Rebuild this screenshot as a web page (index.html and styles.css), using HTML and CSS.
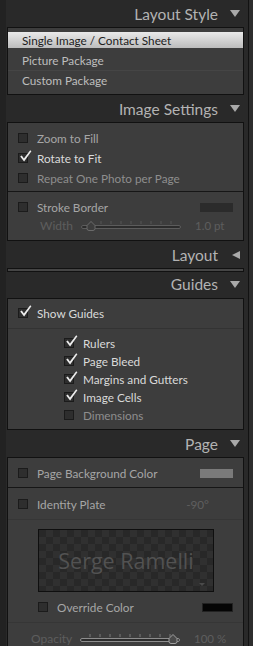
FILE: index.html
```html
<!DOCTYPE html>
<html lang="en">

<head>
    <meta charset="UTF-8">
    <meta name="viewport" content="width=device-width, initial-scale=1.0">
    <title>Print Panels</title>

    <link rel="stylesheet" href="styles.css">
</head>

<body>
    <div class="sidebar">

        <!-- Layout Style -->
        <div class="header"><span class="title">Layout Style</span><span class="arrow down"></span></div>
        <div class="box">
            <div class="list">
                <div class="item active">Single Image / Contact Sheet</div>
                <div class="item">Picture Package</div>
                <div class="item">Custom Package</div>
            </div>
        </div>

        <!-- Image Settings -->
        <div class="header"><span class="title">Image Settings</span><span class="arrow down"></span></div>
        <div class="box">
            <div class="group split">
                <div class="row"><span class="check"></span><span class="label">Zoom to Fill</span></div>
                <div class="row on"><span class="check"><svg viewBox="0 0 13 14"><path d="M1.2 7.6 L2.8 6.6 L4.9 9.6 L11.2 1.2 L12.4 2.2 L5.1 12.6 Z" /></svg></span><span class="label">Rotate to Fit</span></div>
                <div class="row dim"><span class="check"></span><span class="label">Repeat One Photo per Page</span></div>
            </div>
            <div class="group stroke">
                <div class="row"><span class="check"></span><span class="label">Stroke Border</span><span class="swatch dark"></span></div>
                <div class="slide-row width">
                    <span class="slide-label">Width</span>
                    <svg class="slider off" viewBox="0 0 102 14">
                        <path class="ticks" d="M10 3v3M20 3v3M30 3v3M40 3v3M50 3v3M60 3v3M70 3v3M80 3v3M90 3v3" />
                        <rect class="track" x="0.5" y="7.5" width="99" height="3" rx="1.5" />
                        <path class="thumb" d="M10 3.5 L14 7.5 L14 10.5 Q14 12.5 12 12.5 L8 12.5 Q6 12.5 6 10.5 L6 7.5 Z" />
                    </svg>
                    <span class="slide-value">1.0 pt</span>
                </div>
            </div>
        </div>

        <!-- Layout (collapsed) -->
        <div class="header"><span class="title">Layout</span><span class="arrow left"></span></div>
        <div class="box closed"></div>

        <!-- Guides -->
        <div class="header tight"><span class="title">Guides</span><span class="arrow down"></span></div>
        <div class="box">
            <div class="group guides-top">
                <div class="row on"><span class="check"><svg viewBox="0 0 13 14"><path d="M1.2 7.6 L2.8 6.6 L4.9 9.6 L11.2 1.2 L12.4 2.2 L5.1 12.6 Z" /></svg></span><span class="label">Show Guides</span></div>
            </div>
            <div class="group guides-list">
                <div class="row sub on"><span class="check"><svg viewBox="0 0 13 14"><path d="M1.2 7.6 L2.8 6.6 L4.9 9.6 L11.2 1.2 L12.4 2.2 L5.1 12.6 Z" /></svg></span><span class="label">Rulers</span></div>
                <div class="row sub on"><span class="check"><svg viewBox="0 0 13 14"><path d="M1.2 7.6 L2.8 6.6 L4.9 9.6 L11.2 1.2 L12.4 2.2 L5.1 12.6 Z" /></svg></span><span class="label">Page Bleed</span></div>
                <div class="row sub on"><span class="check"><svg viewBox="0 0 13 14"><path d="M1.2 7.6 L2.8 6.6 L4.9 9.6 L11.2 1.2 L12.4 2.2 L5.1 12.6 Z" /></svg></span><span class="label">Margins and Gutters</span></div>
                <div class="row sub on"><span class="check"><svg viewBox="0 0 13 14"><path d="M1.2 7.6 L2.8 6.6 L4.9 9.6 L11.2 1.2 L12.4 2.2 L5.1 12.6 Z" /></svg></span><span class="label">Image Cells</span></div>
                <div class="row sub dim"><span class="check"></span><span class="label">Dimensions</span></div>
            </div>
        </div>

        <!-- Page -->
        <div class="header"><span class="title">Page</span><span class="arrow down"></span></div>
        <div class="box open-end">
            <div class="group page-bg">
                <div class="row"><span class="check"></span><span class="label">Page Background Color</span><span class="swatch grey"></span></div>
            </div>
            <div class="group plate-head">
                <div class="row"><span class="check"></span><span class="label">Identity Plate</span><span class="angle">-90°</span></div>
            </div>
            <div class="group plate-body">
                <div class="plate">
                    <span class="plate-text">Serge Ramelli</span>
                    <span class="plate-menu"></span>
                </div>
                <div class="row indent"><span class="check"></span><span class="label">Override Color</span><span class="swatch black"></span></div>
            </div>
            <div class="group opacity">
                <div class="slide-row">
                    <span class="slide-label">Opacity</span>
                    <svg class="slider" viewBox="0 0 102 14">
                        <path class="ticks" d="M10 3v3M20 3v3M30 3v3M40 3v3M50 3v3M60 3v3M70 3v3M80 3v3M90 3v3" />
                        <rect class="track" x="0.5" y="7.5" width="99" height="3" rx="1.5" />
                        <path class="thumb" d="M93 3.5 L97 7.5 L97 10.5 Q97 12.5 95 12.5 L91 12.5 Q89 12.5 89 10.5 L89 7.5 Z" />
                    </svg>
                    <span class="slide-value">100 %</span>
                </div>
            </div>
        </div>

    </div>
</body>

</html>
```

FILE: styles.css
```css
html,
body {
    margin: 0;
    height: 100%;
    background-color: #2d2d2d;
    overflow: hidden;
}

body {
    font-family: "Lato", "Open Sans", sans-serif;
    font-size: 11.75px;
}

.sidebar {
    width: 241px;
    height: 646px;
    background-color: #292929;
    border-left: 6px solid #222;
    border-right: 1px solid #121212;
    padding-left: 1px;
    overflow: hidden;
}

/* 標題列 */
.header {
    height: 27px;
    display: flex;
    align-items: center;
    justify-content: flex-end;
    padding-right: 8px;
    color: #b3b3b3;
}

.header.tight {
    height: 26px;
    align-items: flex-start;
}

.header.tight .title {
    margin-top: 3px;
}

.header.tight .arrow {
    margin-top: 9px;
}

.title {
    font-size: 15.5px;
    font-weight: 400;
    margin-right: 12px;
}

.arrow {
    width: 0;
    height: 0;
}

.arrow.down {
    border-left: 5px solid transparent;
    border-right: 5px solid transparent;
    border-top: 7px solid #a9a9a9;
}

.arrow.left {
    border-top: 4.5px solid transparent;
    border-bottom: 4.5px solid transparent;
    border-right: 8px solid #a9a9a9;
    margin-left: 2px;
}

/* 面板 */
.box {
    width: 235px;
    background-color: #3d3d3d;
    border: 1px solid #111;
    margin-right: 4px;
}

.box.closed {
    height: 2px;
    background-color: #454545;
}

.box.open-end {
    border-bottom: none;
}

.list {
    padding: 2px 0 4px;
}

.item {
    height: 20px;
    box-sizing: border-box;
    display: flex;
    align-items: center;
    padding-left: 14px;
    border-top: 1px solid #454545;
    color: #bdbdbd;
}

.item.active {
    height: 16px;
    margin: 2px 0;
    border-top: none;
    background: linear-gradient(#e9e9e9, #bcbcbc);
    color: #1c1c1c;
}

.item.active + .item {
    border-top: none;
}

.group.split {
    padding: 5px 0 3px;
    border-bottom: 1px solid #161616;
}

.group.stroke {
    padding: 5px 0 7px;
}

.group.guides-top {
    padding: 4px 0 5px;
    border-bottom: 1px solid #333;
}

.group.guides-list {
    padding: 5px 0 5px;
}

.group.page-bg {
    padding: 5px 0 4px;
    border-bottom: 1px solid #161616;
}

.group.plate-head {
    padding: 6px 0 5px;
    border-bottom: 1px solid #363636;
}

.group.plate-body {
    padding: 9px 0 5px;
    border-bottom: 1px solid #363636;
}

.group.opacity {
    padding: 5px 0 0;
}

/* 勾選列 */
.row {
    height: 20px;
    display: flex;
    align-items: center;
    padding-left: 10px;
    color: #a6a6a6;
}

.row.on {
    color: #dadada;
}

.row.dim {
    color: #8e8e8e;
}

.row.sub {
    height: 18px;
    padding-left: 56px;
}

.row.indent {
    padding-left: 30px;
    margin-top: 5px;
}

.check {
    position: relative;
    flex: none;
    width: 10px;
    height: 10px;
    box-sizing: border-box;
    border: 1px solid #1b1b1b;
    background-color: #2e2e2e;
    margin-right: 9px;
}

.check svg {
    position: absolute;
    left: 0;
    top: -5px;
    width: 13px;
    height: 14px;
    fill: #ececec;
}

.swatch {
    margin-left: auto;
    margin-right: 10px;
    width: 33px;
    height: 9px;
}

.swatch.dark {
    background-color: #2b2b2b;
}

.swatch.grey {
    background-color: #7a7a7a;
}

.swatch.black {
    width: 31px;
    background-color: #050505;
    border: 1px solid #222;
    box-sizing: border-box;
}

.angle {
    margin-left: auto;
    margin-right: 34px;
    color: #5f5f5f;
}

/* 滑桿 */
.slide-row {
    height: 20px;
    display: flex;
    align-items: center;
    padding-left: 23px;
    color: #5d5d5d;
}

.slide-row.width {
    height: 16px;
    padding-left: 32px;
}

.slide-label {
    flex: none;
    width: 49px;
    font-size: 12px;
}

.slide-row.width .slide-label {
    width: 41px;
}

.slider {
    flex: none;
    width: 102px;
    height: 14px;
}

.slider .ticks {
    stroke: #7a7a7a;
    stroke-width: 1;
}

.slider .track {
    fill: #2c2c2c;
    stroke: #8d8d8d;
}

.slider .thumb {
    fill: #4a4a4a;
    stroke: #a0a0a0;
}

.slider.off .ticks {
    stroke: #565656;
}

.slider.off .track {
    stroke: #5c5c5c;
}

.slider.off .thumb {
    fill: #3d3d3d;
    stroke: #6a6a6a;
}

.slide-value {
    margin-left: 12px;
    font-size: 11.5px;
}

/* 名牌 */
.plate {
    position: relative;
    width: 174px;
    height: 61px;
    margin-left: 30px;
    border: 1px solid #0f0f0f;
    background: repeating-conic-gradient(#303030 0 25%, #282828 0 50%) 0 0 / 14px 14px;
    display: flex;
    align-items: center;
    justify-content: center;
}

.plate-text {
    font-family: "Open Sans", "Lato", sans-serif;
    font-size: 21.5px;
    color: #525252;
}

.plate-menu {
    position: absolute;
    right: 8px;
    bottom: 5px;
    border-left: 3px solid transparent;
    border-right: 3px solid transparent;
    border-top: 3px solid #4a4a4a;
}
```
